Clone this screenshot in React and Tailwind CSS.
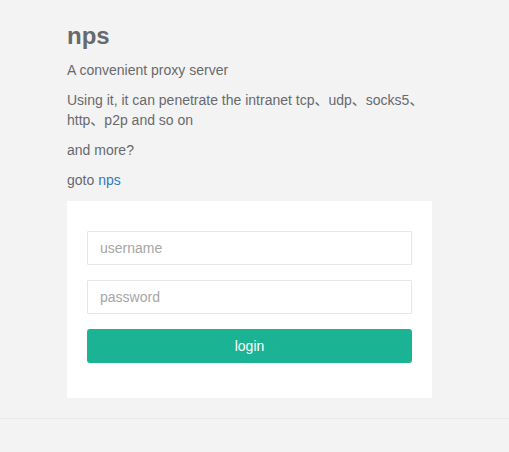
import React from 'react';

export default function App() {
  return (
    <div className="min-h-screen bg-[#f3f3f4] text-[#676a6c] text-[14px] leading-[20px] font-['Liberation_Sans','Noto_Sans_CJK_SC',sans-serif]">
      <div className="ml-[67px] w-[365px] pt-[23px]">
        <h2 className="text-[24px] leading-[26px] font-bold mb-[11px]">nps</h2>
        <p className="mb-[10px]">A convenient proxy server</p>
        <p className="mb-[10px]">Using it, it can penetrate the intranet tcp、udp、socks5、http、p2p and so on</p>
        <p className="mb-[10px]">and more?</p>
        <p className="mb-[11px]">
          goto <a href="#" className="text-[#337ab7]">nps</a>
        </p>

        <div className="bg-white px-[20px] pt-[30px] pb-[35px]">
          <form className="flex flex-col gap-[15px]" onSubmit={(e) => e.preventDefault()}>
            <input
              type="text"
              placeholder="username"
              className="h-[34px] w-full border border-[#e5e6e7] rounded-[1px] px-[12px] text-[14px] outline-none placeholder:text-[#a6a6a6]"
            />
            <input
              type="password"
              placeholder="password"
              className="h-[34px] w-full border border-[#e5e6e7] rounded-[1px] px-[12px] text-[14px] outline-none placeholder:text-[#a6a6a6]"
            />
            <button
              type="submit"
              className="h-[34px] w-full rounded-[3px] bg-[#1ab394] text-white text-[14px]"
            >
              login
            </button>
          </form>
        </div>
      </div>

      <div className="mt-[20px] border-t border-[#e7eaec] h-[34px]" />
    </div>
  );
}
